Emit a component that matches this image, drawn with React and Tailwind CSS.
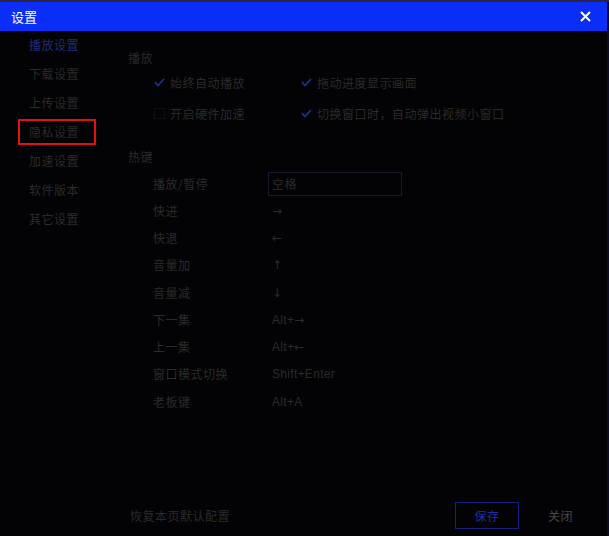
import React from 'react';

const navItems = ['播放设置', '下载设置', '上传设置', '隐私设置', '加速设置', '软件版本', '其它设置'];

const hotkeys = [
    ['播放/暂停', '空格', true],
    ['快进', '→'],
    ['快退', '←'],
    ['音量加', '↑'],
    ['音量减', '↓'],
    ['下一集', 'Alt+→'],
    ['上一集', 'Alt+←'],
    ['窗口模式切换', 'Shift+Enter'],
    ['老板键', 'Alt+A'],
];

const Check = ({ on }) => (
    <span className="w-[13px] h-[13px] flex items-center justify-center">
        {on ? (
            <svg width="11" height="9" viewBox="0 0 11 9">
                <polyline points="1,4 4,7.5 10,1" fill="none" stroke="#23318f" strokeWidth="1.6" />
            </svg>
        ) : (
            <span className="w-[11px] h-[11px] border border-[#0e0e14]" />
        )}
    </span>
);

const Option = ({ on, label }) => (
    <div className="flex items-center gap-[4px]">
        <Check on={on} />
        <span>{label}</span>
    </div>
);

// arrows come from DejaVu so they keep a readable size
const KeyText = ({ value }) => (
    <span className="pl-[4px] tracking-[0.3px]" style={{ fontFamily: '"Liberation Sans", sans-serif' }}>
        {[...value].map((ch, i) =>
            '←→↑↓'.includes(ch) ? (
                <span key={i} style={{ fontFamily: '"DejaVu Sans", sans-serif' }}>{ch}</span>
            ) : (
                ch
            )
        )}
    </span>
);

export default function App() {
    return (
        <div className="w-[609px] h-[536px] flex flex-col bg-[#05050c] overflow-hidden text-[12px] tracking-[0.5px] text-[#2a2a2a]" style={{ fontFamily: '"Noto Sans CJK SC", "Noto Sans", sans-serif' }}>
            {/* background bleeding above the window */}
            <div className="h-[2px] bg-[#2a2440]" />

            <div className="flex flex-1">
                <div className="w-[607px] flex flex-col bg-[#030305]">
                    {/* Title bar */}
                    <div className="h-[29px] bg-[#0b2ef6] flex items-center justify-between pl-[11px] pr-[16px]">
                        <span className="text-white text-[13px] tracking-[0px]">设置</span>
                        <svg width="11" height="11" viewBox="0 0 11 11">
                            <path d="M1 1L10 10M10 1L1 10" stroke="#ffffff" strokeWidth="2" />
                        </svg>
                    </div>

                    <div className="flex flex-1">
                        {/* Sidebar */}
                        <div className="w-[110px] flex flex-col gap-[3px] pt-[1px]">
                            {navItems.map((item, i) => (
                                <div
                                    key={item}
                                    className={`ml-[18px] w-[78px] h-[26px] flex items-center pl-[9px] border-2 ${i === 3 ? 'border-[#e01212]' : 'border-transparent'} ${i === 0 ? 'text-[#202c78]' : ''}`}
                                >
                                    {item}
                                </div>
                            ))}
                        </div>

                        {/* Content */}
                        <div className="flex-1 flex flex-col">
                            <div className="pl-[18px] pt-[18px] h-[36px] leading-[18px]">播放</div>
                            <div className="grid grid-cols-[147px_1fr] pl-[43px]">
                                <div className="h-[31px] flex items-center"><Option on label="始终自动播放" /></div>
                                <div className="h-[31px] flex items-center"><Option on label="拖动进度显示画面" /></div>
                                <div className="h-[31px] flex items-center"><Option label="开启硬件加速" /></div>
                                <div className="h-[31px] flex items-center"><Option on label="切换窗口时，自动弹出视频小窗口" /></div>
                            </div>

                            <div className="pl-[18px] mt-[19px] h-[18px] leading-[18px]">热键</div>
                            <div className="mt-[4px] flex flex-col pl-[43px]">
                                {hotkeys.map(([label, value, boxed]) => (
                                    <div key={label} className="h-[27.25px] flex items-center">
                                        <span className="w-[115px]">{label}</span>
                                        {boxed ? (
                                            <span className="w-[134px] h-[24px] border border-[#171730] flex items-center pl-[3px]">{value}</span>
                                        ) : (
                                            <KeyText value={value} />
                                        )}
                                    </div>
                                ))}
                            </div>

                            {/* Footer */}
                            <div className="mt-auto mb-[7px] flex items-center pl-[20px] pr-[34px]">
                                <span>恢复本页默认配置</span>
                                <div className="flex-1" />
                                <button className="w-[64px] h-[27px] border border-[#161c84] text-[#1f2f9e] flex items-center justify-center">保存</button>
                                <span className="ml-[29px] text-[#4a4a4a]">关闭</span>
                            </div>
                        </div>
                    </div>
                </div>
                <div className="w-[2px] bg-[#0a0c24]" />
            </div>
        </div>
    );
}
